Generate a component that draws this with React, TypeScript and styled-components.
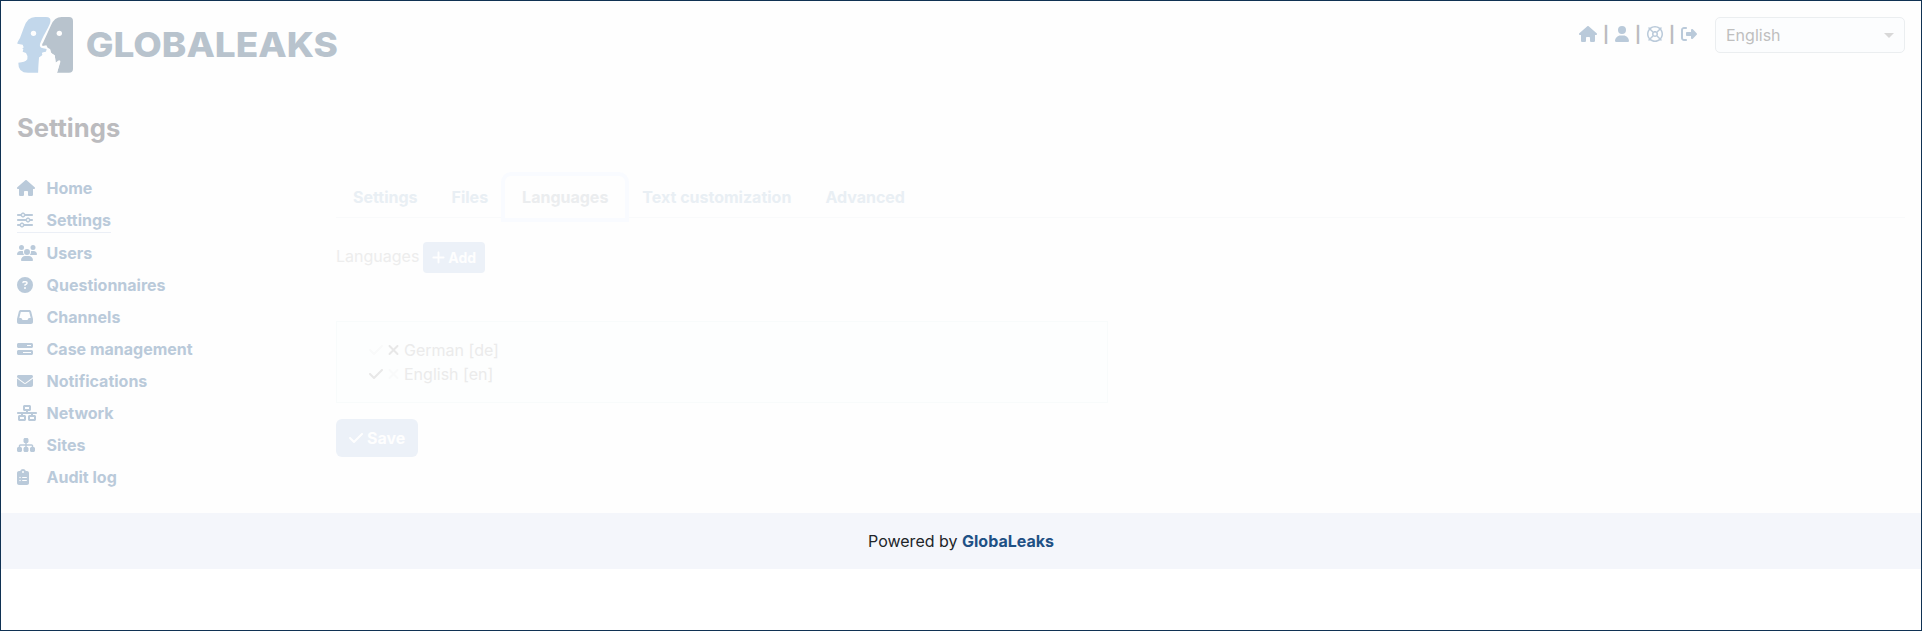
import React from "react";
import styled, { createGlobalStyle, css } from "styled-components";
import {
  FaHouse, FaUser, FaRegLifeRing, FaRightFromBracket, FaSliders, FaUsers,
  FaCircleQuestion, FaInbox, FaBarsProgress, FaEnvelope, FaNetworkWired,
  FaSitemap, FaClipboardList, FaPlus, FaCheck, FaXmark,
} from "react-icons/fa6";

const GlobalStyle = createGlobalStyle`
  *, *::before, *::after { box-sizing: border-box; }
  body {
    margin: 0;
    font: 400 16px/24px Inter, "Liberation Sans", sans-serif;
    background: #fff;
  }
`;

const Page = styled.div`
  display: flex;
  flex-direction: column;
  height: 631px;
  border: 1px solid #103253;
`;

const Faded = styled.div`
  display: flex;
  flex-direction: column;
  height: 512px;
  padding: 16px 16px 0;
  background: #fefefe;
`;

const Header = styled.header`
  display: flex;
  justify-content: space-between;
  align-items: flex-start;
  height: 56px;
`;

const Brand = styled.div`
  display: flex;
`;

const HeaderTools = styled.div`
  display: flex;
  align-items: flex-start;
`;

const Shortcuts = styled.nav`
  display: flex;
  align-items: center;
  height: 24px;
  margin: 5px 18px 0 0;
  color: #bacada;
`;

/* Glyph whose width follows the drawing's own proportions. */
const Glyph = styled.span<{ $width?: number; $height?: number }>`
  display: block;
  flex: none;
  svg {
    display: block;
    width: ${(p) => p.$width ?? 16}px;
    height: ${(p) => p.$height ?? 16}px;
  }
`;

const Divider = styled.span`
  width: 18px;
  text-align: center;
  font-weight: 700;
  color: #bbbbbf;
`;

const LanguageSelect = styled.div`
  display: flex;
  align-items: center;
  justify-content: space-between;
  width: 190px;
  height: 36px;
  padding: 0 10px 0 10px;
  border: 1px solid #ebeef0;
  border-radius: 5px;
  background: #fcfdfe;
  color: #bfbfbf;
`;

const Caret = styled.span`
  border: 5px solid transparent;
  border-top-color: #d8d8d8;
  border-bottom: 0;
`;

const Title = styled.h1`
  margin: 39px 0 0;
  font-size: 25.6px;
  line-height: 31px;
  font-weight: 700;
  color: #bbbbbe;
`;

const Columns = styled.div`
  display: flex;
  margin-top: 29px;
`;

const Sidebar = styled.nav`
  display: flex;
  flex-direction: column;
  align-items: flex-start;
  width: 319px;
`;

const SideLink = styled.a<{ $active?: boolean }>`
  display: flex;
  align-items: center;
  margin: 4px 0;
  height: 24px;
  font-weight: 700;
  color: #bacada;
  ${(p) => p.$active && css`
    height: 25px;
    border-bottom: 1px solid #ebeff6;
  `}
`;

const SideIcon = styled(Glyph)`
  width: 29.5px;
`;

const Main = styled.main`
  flex: 1;
  padding-top: 4px;
`;

const Tabs = styled.div`
  display: flex;
  height: 42px;
  border-bottom: 1px solid #f9fafb;
`;

const Tab = styled.a<{ $active?: boolean }>`
  height: 42px;
  padding: 8px 16px;
  border: 1px solid transparent;
  border-radius: 6px 6px 0 0;
  font-weight: 700;
  color: #e9eff4;
  ${(p) => p.$active && css`
    color: #ebedef;
    background: #fefefe;
    box-shadow: 0 0 0 4px #f9fbff;
  `}
`;

const AddRow = styled.div`
  display: flex;
  align-items: flex-start;
  gap: 4px;
  margin-top: 24px;
  height: 31px;
  color: #ededed;
`;

const AddLabel = styled.span`
  padding-top: 2px;
`;

const Button = styled.button<{ $small?: boolean }>`
  display: inline-flex;
  align-items: center;
  gap: ${(p) => (p.$small ? 3 : 4)}px;
  height: ${(p) => (p.$small ? 31 : 38)}px;
  padding: 0 ${(p) => (p.$small ? 9 : 13)}px;
  border: 0;
  border-radius: ${(p) => (p.$small ? 4 : 6)}px;
  background: #ecf1f8;
  color: #fefefe;
  font: 700 ${(p) => (p.$small ? 14 : 16)}px/24px Inter, sans-serif;
`;

const LanguageBox = styled.div`
  width: 772px;
  height: 82px;
  margin: 48px 0 16px;
  padding: 16px 32px;
  border: 1px solid #f8fbfb;
  background: #fdfefe;
  color: #ebebeb;
`;

const LanguageRow = styled.div`
  display: flex;
  align-items: center;
  height: 24px;
`;

const Mark = styled(Glyph)<{ $on: boolean; $space: number }>`
  width: ${(p) => p.$space}px;
  color: ${(p) => (p.$on ? "#e8e8e8" : "#f9fafa")};
`;

const Footer = styled.footer`
  display: flex;
  justify-content: center;
  align-items: center;
  gap: 4.5px;
  height: 56px;
  background: #f4f6fb;
  color: #212529;
  a { font-weight: 700; color: #1f5185; }
`;

const sideItems = [
  { label: "Home", Icon: FaHouse, width: 18 },
  { label: "Settings", Icon: FaSliders, width: 16, active: true },
  { label: "Users", Icon: FaUsers, width: 20 },
  { label: "Questionnaires", Icon: FaCircleQuestion, width: 16 },
  { label: "Channels", Icon: FaInbox, width: 16 },
  { label: "Case management", Icon: FaBarsProgress, width: 16 },
  { label: "Notifications", Icon: FaEnvelope, width: 16 },
  { label: "Network", Icon: FaNetworkWired, width: 20 },
  { label: "Sites", Icon: FaSitemap, width: 18 },
  { label: "Audit log", Icon: FaClipboardList, width: 12 },
];

const tabs = ["Settings", "Files", "Languages", "Text customization", "Advanced"];

const languages = [
  { label: "German [de]", isDefault: false },
  { label: "English [en]", isDefault: true },
];

const Logo = () => (
  <svg width="322" height="56" viewBox="51 51 966 168" role="img" aria-label="GlobaLeaks">
    <path fill="#c2d7eb" d="M106 51H138Q154 51 151 66C148 80 136 94 120 132Q118 141 126 144L140 147L138 155L129 158L126 160L128 165L117 173L115 218H84Q54 218 55 188Q75 188 82 178Q84 166 78 159L68 155L70 148L67 146L71 142L68 134L52 131Q51 128 60 114L72 82Q82 51 106 51Z" />
    <path fill="#b8c3cd" d="M185 51H207Q219 51 219 63V207Q219 218 207 218H171L181 186Q181 178 174 182L167 188Q166 175 164 166Q154 163 152 155L150 147L143 143L139 136L128 138Q124 135 130 127L153 76Q163 51 185 51Z" />
    <path fill="#fefefe" d="M117 173L128 165L126 158L138 155L150 147L153 158L164 166L167 188L181 182L171 219H115Z" />
    <circle cx="100.500" cy="100" r="8" fill="#fefefe" />
    <circle cx="178" cy="100" r="8" fill="#fefefe" />
    <text x="257" y="171" fill="#b8c3cd" fontFamily="Inter, sans-serif" fontWeight="800" fontSize="103" textLength="757" lengthAdjust="spacingAndGlyphs">GLOBALEAKS</text>
  </svg>
);

export default function App() {
  return (
    <>
      <GlobalStyle />
      <Page>
        <Faded>
          <Header>
            <Brand><Logo /></Brand>
            <HeaderTools>
              <Shortcuts>
                <Glyph $width={18}><FaHouse /></Glyph><Divider>|</Divider>
                <Glyph $width={14}><FaUser /></Glyph><Divider>|</Divider>
                <Glyph><FaRegLifeRing /></Glyph><Divider>|</Divider>
                <Glyph><FaRightFromBracket /></Glyph>
              </Shortcuts>
              <LanguageSelect>English<Caret /></LanguageSelect>
            </HeaderTools>
          </Header>
          <Title>Settings</Title>
          <Columns>
            <Sidebar>
              {sideItems.map(({ label, Icon, width, active }) => (
                <SideLink key={label} $active={active}>
                  <SideIcon $width={width}><Icon /></SideIcon>{label}
                </SideLink>
              ))}
            </Sidebar>
            <Main>
              <Tabs>
                {tabs.map((t) => <Tab key={t} $active={t === "Languages"}>{t}</Tab>)}
              </Tabs>
              <AddRow>
                <AddLabel>Languages</AddLabel>
                <Button $small><Glyph $width={13} $height={15}><FaPlus /></Glyph>Add</Button>
              </AddRow>
              <LanguageBox>
                {languages.map(({ label, isDefault }) => (
                  <LanguageRow key={label}>
                    <Mark $on={isDefault} $space={18} $width={14}><FaCheck /></Mark>
                    <Mark $on={!isDefault} $space={17} $width={13}><FaXmark /></Mark>
                    {label}
                  </LanguageRow>
                ))}
              </LanguageBox>
              <Button><Glyph $width={14}><FaCheck /></Glyph>Save</Button>
            </Main>
          </Columns>
        </Faded>
        <Footer>Powered by <a>GlobaLeaks</a></Footer>
      </Page>
    </>
  );
}
